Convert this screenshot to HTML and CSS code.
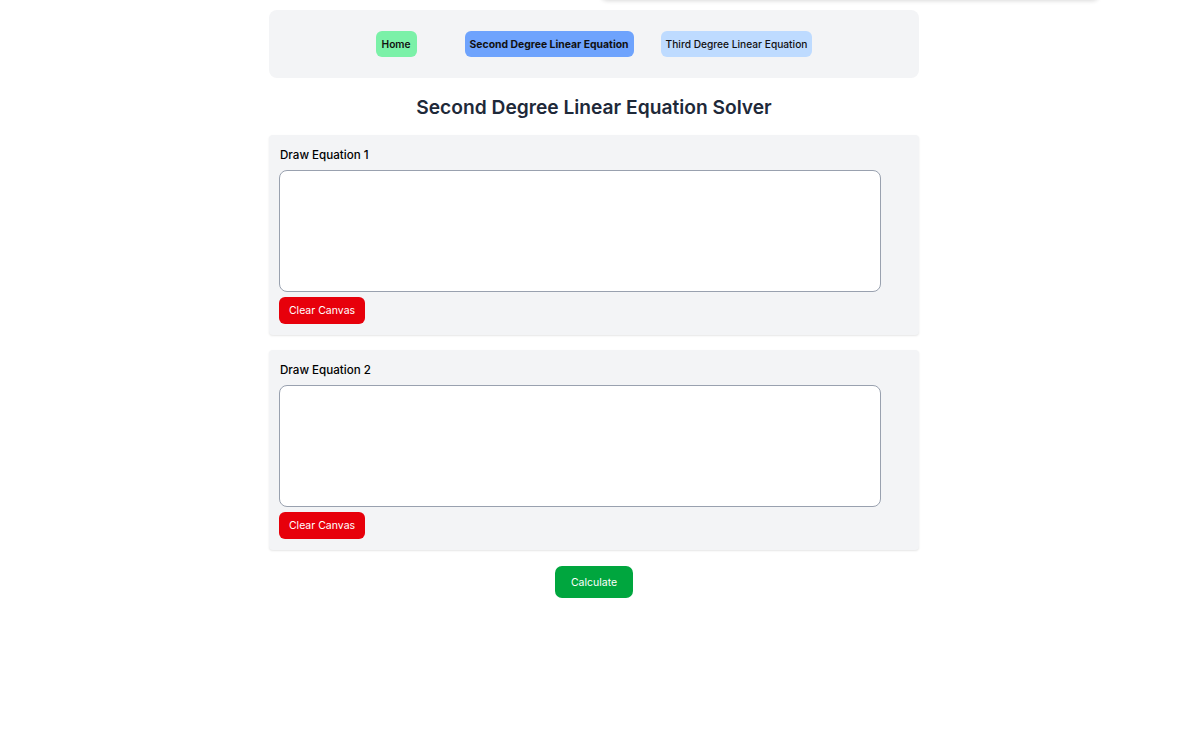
FILE: index.html
```html
<!DOCTYPE html>
<html>
<head>
<meta charset="utf-8">
<link rel="stylesheet" href="styles.css">
</head>
<body>
<div class="topbar"></div>
<div class="page">
  <nav class="nav">
    <ul class="nav-list">
      <li class="nav-item"><a class="nav-link home">Home</a></li>
      <li class="nav-item"><a class="nav-link active">Second Degree Linear Equation</a></li>
      <li class="nav-item"><a class="nav-link third">Third Degree Linear Equation</a></li>
    </ul>
  </nav>
  <h1 class="title">Second Degree Linear Equation Solver</h1>
  <section class="card">
    <label class="card-label">Draw Equation 1</label>
    <div class="canvas"></div>
    <button class="btn-clear">Clear Canvas</button>
  </section>
  <section class="card">
    <label class="card-label">Draw Equation 2</label>
    <div class="canvas"></div>
    <button class="btn-clear">Clear Canvas</button>
  </section>
  <div class="actions">
    <button class="btn-calc">Calculate</button>
  </div>
</div>
</body>
</html>
```
FILE: styles.css
```css
* { box-sizing: border-box; }
html, body { margin: 0; padding: 0; background: #fff; }
body {
  font-family: Inter, "Noto Sans", sans-serif;
  color: #000;
  position: relative;
  min-height: 743px;
  overflow: hidden;
}
.topbar {
  position: absolute;
  top: -40px;
  left: 600px;
  width: 500px;
  height: 40px;
  background: #fff;
  border-radius: 8px;
  box-shadow: 0 1px 4px rgba(0,0,0,0.15);
}
.page {
  width: 650px;
  margin-left: 269px;
  padding-top: 10px;
}
.nav {
  background: #f3f4f6;
  border-radius: 8px;
  height: 68px;
  display: flex;
  align-items: center;
  justify-content: center;
}
.nav-list {
  list-style: none;
  margin: 0;
  padding: 0;
  display: flex;
  align-items: center;
}
.nav-item { display: flex; }
.nav-link {
  display: block;
  height: 26px;
  line-height: 27px;
  padding: 0 5px;
  border-radius: 6px;
  font-size: 10.2px;
  font-weight: 500;
  color: #111;
}
.nav-link.home { background: #7bf1a8; font-weight: 600; padding: 0 6px; margin-right: 48px; }
.nav-link.active { background: #6ea3fd; font-weight: 700; font-size: 10.4px; margin-right: 27px; }
.nav-link.third { background: #bedbff; }
.title {
  margin: 16px 0 0;
  text-align: center;
  font-size: 19.2px;
  line-height: 26px;
  font-weight: 600;
  color: #1e2939;
}
.card {
  margin-top: 15px;
  background: #f3f4f6;
  border-radius: 4px;
  box-shadow: 0 1px 2px rgba(0,0,0,0.1);
  padding: 12px 10px 11px;
  display: flex;
  flex-direction: column;
  align-items: flex-start;
}
.card + .card { margin-top: 15px; }
.card-label {
  font-size: 11.6px;
  font-weight: 500;
  line-height: 16px;
  color: #000;
  padding-left: 1px;
}
.canvas {
  margin-top: 7px;
  width: 602px;
  height: 122px;
  background: #fff;
  border: 1px solid #99a1af;
  border-radius: 8px;
}
.btn-clear {
  margin-top: 5px;
  height: 27px;
  width: 86px;
  border: none;
  border-radius: 6px;
  background: #e7000b;
  color: #fff;
  font-family: inherit;
  font-size: 10.5px;
  padding: 0;
}
.actions {
  display: flex;
  justify-content: center;
  margin-top: 16px;
}
.btn-calc {
  height: 32px;
  width: 78px;
  border: none;
  border-radius: 7px;
  background: #00a63e;
  color: #fff;
  font-family: inherit;
  font-size: 10.5px;
  padding: 0;
}
```
